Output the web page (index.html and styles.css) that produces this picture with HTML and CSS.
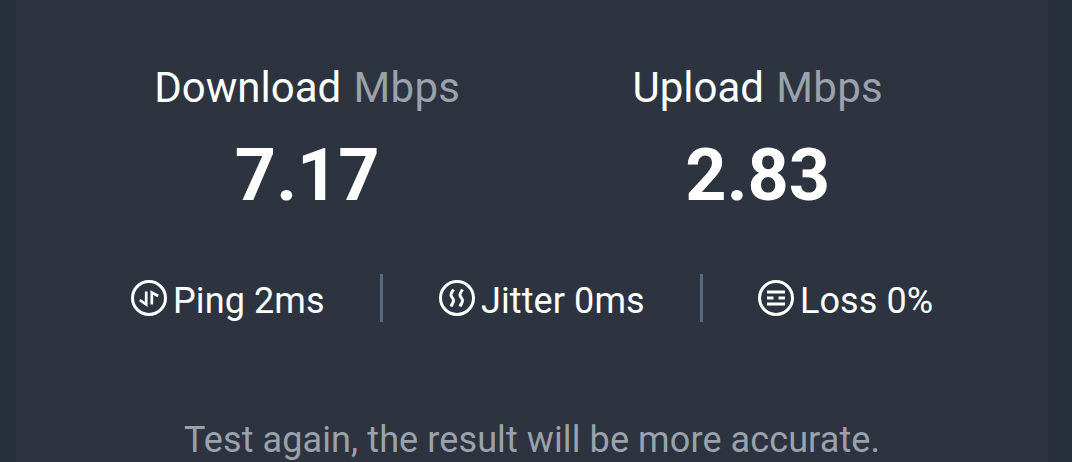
FILE: index.html
```
<!DOCTYPE html>
<html lang="en">
<head>
    <meta charset="utf-8">
    <title>Speed test</title>
    <link rel="stylesheet" href="styles.css">
</head>
<body>
    <div class="card">
        <div class="speeds">
            <div class="speed">
                <div class="label">Download <span>Mbps</span></div>
                <div class="value">7.17</div>
            </div>
            <div class="speed">
                <div class="label">Upload <span>Mbps</span></div>
                <div class="value">2.83</div>
            </div>
        </div>

        <div class="stats">
            <div class="stat ping">
                <svg class="icon" viewBox="0 0 36 36">
                    <circle cx="18" cy="18" r="16.5" />
                    <path class="thin" d="M8.800 20l6.400 4.500V11.500M27.200 16L20.800 12.500V24.500" />
                </svg>
                <span>Ping 2ms</span>
            </div>
            <div class="stat jitter">
                <svg class="icon" viewBox="0 0 36 36">
                    <circle cx="18" cy="18" r="16.5" />
                    <path d="M14.500 9.500C13 12 11.500 13.500 12 15.500S15 18.500 14.500 21S13 24 12 26.500M23.500 9.500C22 12 20.500 13.500 21 15.500S24 18.500 23.500 21S22 24 21 26.500" />
                </svg>
                <span>Jitter 0ms</span>
            </div>
            <div class="stat loss">
                <svg class="icon" viewBox="0 0 36 36">
                    <circle cx="18" cy="18" r="16.5" />
                    <path d="M9 12h18M9 18h6.500M20.500 18h6.500M9 24h18" />
                </svg>
                <span>Loss 0%</span>
            </div>
        </div>

        <p class="hint">Test again, the result will be more accurate.</p>
    </div>
</body>
</html>
```

FILE: styles.css
```
body {
    margin: 0;
    padding: 0 24px 0 16px;
    height: 462px;
    box-sizing: border-box;
    overflow: hidden;
    background-color: #252e3a;
    color: #fff;
    font-family: Roboto, sans-serif;
}

.card {
    height: 462px;
    box-sizing: border-box;
    padding-top: 63px;
    background-color: #2d3440;
}

.speeds {
    display: flex;
    padding: 0 65px 0 66px;
}

.speed {
    flex: 1;
    text-align: center;
}

.label {
    font-size: 42px;
    line-height: 50px;
    white-space: nowrap;
}

.label span {
    margin-left: 2px;
    letter-spacing: 0.3px;
    color: #9aa2ac;
}

.value {
    margin-top: 23px;
    font-size: 72px;
    line-height: 80px;
    font-weight: bold;
}

.stats {
    display: flex;
    margin-top: 58px;
    height: 48px;
}

.stat {
    display: flex;
    align-items: center;
    box-sizing: border-box;
    font-size: 36px;
    letter-spacing: 0.1px;
    white-space: nowrap;
}

.stat span {
    padding-top: 6px;
}

.stat + .stat {
    border-left: 3px solid #5a6a81;
}

.ping {
    width: 364px;
    padding-left: 115px;
}

.jitter {
    width: 320px;
    padding-left: 56px;
}

.loss {
    padding-left: 55px;
}

.icon {
    width: 36px;
    height: 36px;
    margin-right: 6px;
    fill: none;
    stroke: #fff;
    stroke-width: 3;
}

.icon .thin {
    stroke-width: 2.7;
}

.hint {
    margin: 97px 0 0;
    font-size: 36px;
    line-height: 42px;
    letter-spacing: 0.1px;
    text-align: center;
    color: #9aa2ac;
}
```
